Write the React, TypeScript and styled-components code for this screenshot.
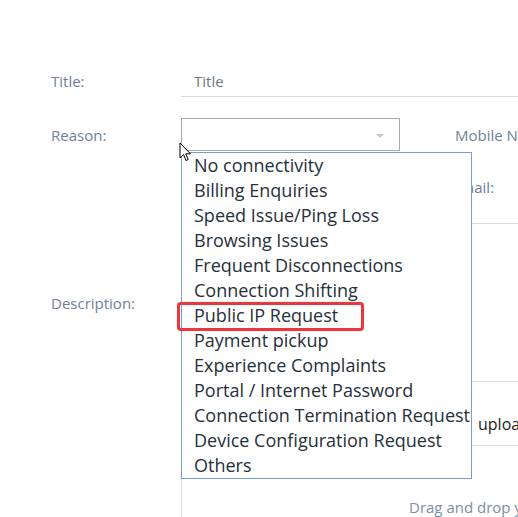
import React from "react";
import styled, { createGlobalStyle } from "styled-components";

const GlobalStyle = createGlobalStyle`
  html, body {
    margin: 0;
    padding: 0;
    background: #ffffff;
    overflow: hidden;
  }
  body {
    font-family: "Open Sans", "Noto Sans", Arial, sans-serif;
  }
`;

const reasons = [
  "No connectivity",
  "Billing Enquiries",
  "Speed Issue/Ping Loss",
  "Browsing Issues",
  "Frequent Disconnections",
  "Connection Shifting",
  "Public IP Request",
  "Payment pickup",
  "Experience Complaints",
  "Portal / Internet Password",
  "Connection Termination Request",
  "Device Configuration Request",
  "Others",
];

const Page = styled.div`
  position: relative;
  width: 760px;
  height: 517px;
  padding: 65px 0 0 51px;
  box-sizing: border-box;
`;

const Row = styled.div<{ $h: number }>`
  display: flex;
  align-items: center;
  height: ${(p) => p.$h}px;
`;

const Label = styled.label`
  width: 130px;
  flex-shrink: 0;
  font-size: 15px;
  color: #6e8196;
`;

const SideLabel = styled.span<{ $gap: number }>`
  margin-left: ${(p) => p.$gap}px;
  font-size: 15px;
  color: #6e8196;
  white-space: nowrap;
`;

const LineInput = styled.div`
  flex: 1;
  align-self: stretch;
  display: flex;
  align-items: center;
  padding-left: 13px;
  border-bottom: 1px solid #dddddd;
  font-size: 15px;
  color: #6f7882;
`;

const Field = styled.div`
  position: relative;
  flex: 1;
  align-self: stretch;
  display: flex;
  align-items: center;
`;

const Select = styled.div`
  position: relative;
  width: 219px;
  height: 33px;
  box-sizing: border-box;
  border: 1px solid #aaaaaa;
  background: #fff;

  &::after {
    content: "";
    position: absolute;
    right: 15px;
    top: 15px;
    border-left: 4px solid transparent;
    border-right: 4px solid transparent;
    border-top: 4px solid #c6c6c6;
  }
`;

const TextArea = styled.div`
  flex: 1;
  align-self: stretch;
  border-top: 1px solid #dddddd;
  border-bottom: 1px solid #dddddd;
`;

const UploadRow = styled.div`
  flex: 1;
  align-self: stretch;
  border-bottom: 1px solid #dddddd;
  padding: 31px 0 0 297px;
  font-size: 16px;
  color: #1c1c1c;
  white-space: nowrap;
`;

const DropZone = styled.div`
  flex: 1;
  align-self: stretch;
  border-left: 1px solid #dddddd;
  padding: 20px 0 0 227px;
  font-size: 15px;
  color: #7b8ea4;
  white-space: nowrap;
`;

const ListBox = styled.ul`
  position: absolute;
  left: 181px;
  top: 152px;
  width: 291px;
  margin: 0;
  padding: 0;
  list-style: none;
  box-sizing: border-box;
  border: 1px solid #7a9bd3;
  background: #ffffff;
  z-index: 2;
`;

const Option = styled.li`
  position: relative;
  height: 25px;
  line-height: 25px;
  padding-left: 12px;
  font-size: 18px;
  color: #26303b;
  white-space: nowrap;
`;

/* red annotation frame around one entry */
const Mark = styled.span`
  position: absolute;
  left: -5px;
  top: -1px;
  width: 187px;
  height: 29px;
  box-sizing: border-box;
  border: 3px solid #e8383b;
  border-radius: 4px;
  box-shadow: 0 0 1px rgba(0, 0, 0, 0.35);
`;

const Pointer = styled.svg`
  position: absolute;
  left: 179px;
  top: 142px;
  z-index: 3;
`;

export default function App() {
  return (
    <>
      <GlobalStyle />
      <Page>
        <Row $h={32}>
          <Label>Title:</Label>
          <LineInput>Title</LineInput>
        </Row>
        <Row $h={21} />
        <Row $h={33}>
          <Label>Reason:</Label>
          <Field>
            <Select />
            <SideLabel $gap={55}>Mobile Number:</SideLabel>
          </Field>
        </Row>
        <Row $h={72}>
          <Label />
          <Field>
            <SideLabel $gap={271}>Email:</SideLabel>
          </Field>
        </Row>
        <Row $h={159}>
          <Label>Description:</Label>
          <TextArea />
        </Row>
        <Row $h={64}>
          <Label />
          <UploadRow>upload</UploadRow>
        </Row>
        <Row $h={31} />
        <Row $h={40}>
          <Label />
          <DropZone>Drag and drop your files here</DropZone>
        </Row>

        <ListBox role="listbox">
          {reasons.map((r) => (
            <Option key={r}>
              {r === "Public IP Request" && <Mark />}
              {r}
            </Option>
          ))}
        </ListBox>

        <Pointer width="13" height="20" viewBox="0 0 13 20">
          <path
            d="M1 1 L1 16 L4.5 12.5 L7 18.5 L9.2 17.6 L6.8 11.8 L11.5 11.8 Z"
            fill="#ffffff"
            stroke="#000000"
            strokeWidth="1"
            strokeLinejoin="miter"
          />
        </Pointer>
      </Page>
    </>
  );
}
